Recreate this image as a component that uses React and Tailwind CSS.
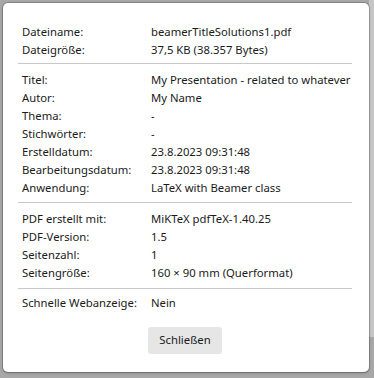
import React from "react";

const F = { fontFamily: '"Noto Sans", "Open Sans", sans-serif' };

function Row({ label, value }) {
  return (
    <div className="flex h-[18px] items-center leading-[18px]">
      <div className="w-[133px] shrink-0 pl-[4px]">{label}</div>
      <div className="whitespace-nowrap">{value}</div>
    </div>
  );
}

function Sep({ className }) {
  return <div className={"h-px bg-[#c8c8c8] " + className} />;
}

export default function App() {
  return (
    <div className="relative h-[378px] w-[374px] overflow-hidden bg-[#a8a8a8]" style={F}>
      <div className="absolute right-0 top-0 h-[337px] w-[5px] bg-[#c6c6c6]" />
      <div className="relative ml-[3px] mt-[3px] h-[369px] w-[366px] rounded-[5px] bg-white px-[15px] pt-[20px] text-[11.3px] text-[#1b1b1b] shadow-[0_0_0_1px_rgba(0,0,0,0.18),0_1px_3px_rgba(0,0,0,0.25)]">
        <div className="w-[334px]">
          <Row label="Dateiname:" value="beamerTitleSolutions1.pdf" />
          <Row label="Dateigröße:" value="37,5 KB (38.357 Bytes)" />
          <Sep className="mt-[4px]" />
          <div className="mt-[7px]">
            <Row label="Titel:" value="My Presentation - related to whatever" />
            <Row label="Autor:" value="My Name" />
            <Row label="Thema:" value="-" />
            <Row label="Stichwörter:" value="-" />
            <Row label="Erstelldatum:" value="23.8.2023 09:31:48" />
            <Row label="Bearbeitungsdatum:" value="23.8.2023 09:31:48" />
            <Row label="Anwendung:" value="LaTeX with Beamer class" />
          </div>
          <Sep className="mt-[5px]" />
          <div className="mt-[7px]">
            <Row label="PDF erstellt mit:" value="MiKTeX pdfTeX-1.40.25" />
            <Row label="PDF-Version:" value="1.5" />
            <Row label="Seitenzahl:" value="1" />
            <Row label="Seitengröße:" value="160 × 90 mm (Querformat)" />
          </div>
          <Sep className="mt-[6px]" />
          <div className="mt-[5px]">
            <Row label="Schnelle Webanzeige:" value="Nein" />
          </div>
          <div className="mt-[15px] flex justify-center">
            <button className="h-[27px] w-[74px] rounded-[3px] bg-[#e6e6e6] text-[11.3px] text-[#1b1b1b]">
              Schließen
            </button>
          </div>
        </div>
      </div>
    </div>
  );
}
